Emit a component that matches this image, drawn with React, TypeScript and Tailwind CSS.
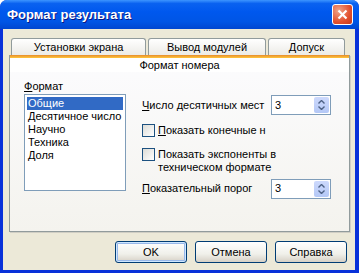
import React, { useState } from "react";

const font = { fontFamily: '"Liberation Sans", Arial, sans-serif' };

function SpinBox({ value }: { value: string }) {
  return (
    <div className="flex h-[20px] w-[60px] items-center border border-[#7f9db9] bg-white pl-[3px] pr-[1px]">
      <span className="flex-1 text-[11px] leading-none text-black">{value}</span>
      <div className="flex h-[16px] w-[15px] flex-col items-center justify-center gap-[2px] rounded-[2px] bg-[linear-gradient(to_bottom,#cdd9fc,#b4c8f6)]">
        <svg width="7" height="4" viewBox="0 0 7 4">
          <path d="M0.5 3.5 L3.5 0.5 L6.5 3.5" fill="none" stroke="#4d6185" strokeWidth="1.4" />
        </svg>
        <svg width="7" height="4" viewBox="0 0 7 4">
          <path d="M0.5 0.5 L3.5 3.5 L6.5 0.5" fill="none" stroke="#4d6185" strokeWidth="1.4" />
        </svg>
      </div>
    </div>
  );
}

function CheckBox({ checked, onClick }: { checked: boolean; onClick: () => void }) {
  return (
    <div
      onClick={onClick}
      className="h-[13px] w-[13px] shrink-0 border border-[#1c5180] bg-[linear-gradient(135deg,#dcdcd7,#ffffff)]"
    >
      {checked && (
        <svg width="11" height="11" viewBox="0 0 11 11">
          <path d="M2 5 L4.5 7.5 L9 3" fill="none" stroke="#21a121" strokeWidth="2" />
        </svg>
      )}
    </div>
  );
}

function Tab({ label, width }: { label: string; width: string }) {
  return (
    <div
      className={`${width} flex h-[17px] items-center justify-center rounded-t-[3px] border border-b-0 border-[#919b9c] bg-[linear-gradient(to_bottom,#ffffff,#ecebe6)] text-[11px] text-black`}
    >
      {label}
    </div>
  );
}

function Button({ label, focused }: { label: string; focused?: boolean }) {
  return (
    <button
      className={`flex h-[22px] w-[72px] items-center justify-center rounded-[3px] border border-[#003c74] bg-[linear-gradient(to_bottom,#ffffff,#f0f0ea_60%,#d6d0c5)] text-[11px] text-black ${
        focused ? "shadow-[inset_0_0_0_1px_#cee7ff,inset_0_0_0_2px_#98b8ea]" : ""
      }`}
    >
      {label}
    </button>
  );
}

export default function App() {
  const [selected, setSelected] = useState(0);
  const [showEnd, setShowEnd] = useState(false);
  const [showExp, setShowExp] = useState(false);
  const formats = ["Общие", "Десятичное число", "Научно", "Техника", "Доля"];

  return (
    <div className="flex h-[273px] w-[359px] flex-col overflow-hidden rounded-t-[7px] bg-[#0831d9]" style={font}>
      {/* Title bar */}
      <div className="flex h-[29px] shrink-0 items-center justify-between bg-[linear-gradient(to_bottom,#3d95ff_0%,#0a62f0_12%,#0058ee_40%,#0055e5_75%,#0046d0_100%)] pl-[7px] pr-[6px]">
        <span className="text-[13px] font-bold text-white [text-shadow:1px_1px_#0a1883]">
          Формат результата
        </span>
        <div className="flex h-[21px] w-[21px] items-center justify-center rounded-[3px] border border-white bg-[radial-gradient(circle_at_30%_30%,#f0a58a,#e2502e_60%,#c4381c)]">
          <svg width="11" height="11" viewBox="0 0 11 11">
            <path d="M1.5 1.5 L9.5 9.5 M9.5 1.5 L1.5 9.5" stroke="white" strokeWidth="2.2" />
          </svg>
        </div>
      </div>

      {/* Body */}
      <div className="ml-[3px] mr-[4px] mb-[3px] flex flex-1 flex-col bg-[#ece9d8] pt-[9px]">
        {/* Tabs */}
        <div className="flex gap-[2px] pl-[8px]">
          <Tab label="Установки экрана" width="w-[135px]" />
          <Tab label="Вывод модулей" width="w-[118px]" />
          <Tab label="Допуск" width="w-[77px]" />
        </div>

        {/* Panel */}
        <div className="ml-[6px] flex h-[177px] w-[341px] flex-col border border-t-0 border-[#919b9c] bg-[linear-gradient(to_bottom,#fcfcfe,#f4f3ee)] shadow-[1px_1px_0_#d0cec4]">
          <div className="h-[3px] bg-[linear-gradient(to_bottom,#e68b2c,#ffc73c)]" />
          <div className="flex h-[14px] items-center justify-center bg-white text-[11px] text-black">
            Формат номера
          </div>

          <div className="flex gap-[16px] pl-[14px] pt-[8px]">
            {/* Left column */}
            <div className="flex w-[102px] flex-col">
              <div className="h-[14px] text-[11px] leading-[13px] text-black">
                <span className="underline">Ф</span>ормат
              </div>
              <div className="h-[97px] border border-[#7f9db9] bg-white p-[2px]">
                {formats.map((f, i) => (
                  <div
                    key={f}
                    onClick={() => setSelected(i)}
                    className={`h-[13px] pl-[1px] text-[11px] leading-[13px] ${
                      selected === i ? "bg-[#316ac5] text-white" : "text-black"
                    }`}
                  >
                    {f}
                  </div>
                ))}
              </div>
            </div>

            {/* Right column */}
            <div className="flex flex-col pt-[15px]">
              <div className="flex items-center gap-[4px]">
                <span className="w-[125px] text-[11px] text-black">
                  <span className="underline">Ч</span>исло десятичных мест
                </span>
                <SpinBox value="3" />
              </div>
              <div className="mt-[7px] flex items-center gap-[3px]">
                <CheckBox checked={showEnd} onClick={() => setShowEnd(!showEnd)} />
                <span className="text-[11px] text-black">
                  <span className="underline">П</span>оказать конечные н
                </span>
              </div>
              <div className="mt-[9px] flex items-start gap-[3px]">
                <CheckBox checked={showExp} onClick={() => setShowExp(!showExp)} />
                <span className="text-[11px] leading-[13px] text-black">
                  Показать экспоненты в
                  <br />
                  техническом формате
                </span>
              </div>
              <div className="mt-[5px] flex items-center gap-[4px]">
                <span className="w-[125px] text-[11px] text-black">
                  <span className="underline">П</span>оказательный порог
                </span>
                <SpinBox value="3" />
              </div>
            </div>
          </div>
        </div>

        {/* Buttons */}
        <div className="mt-[9px] flex justify-end gap-[8px] pr-[8px]">
          <Button label="OK" focused />
          <Button label="Отмена" />
          <Button label="Справка" />
        </div>
      </div>
    </div>
  );
}
